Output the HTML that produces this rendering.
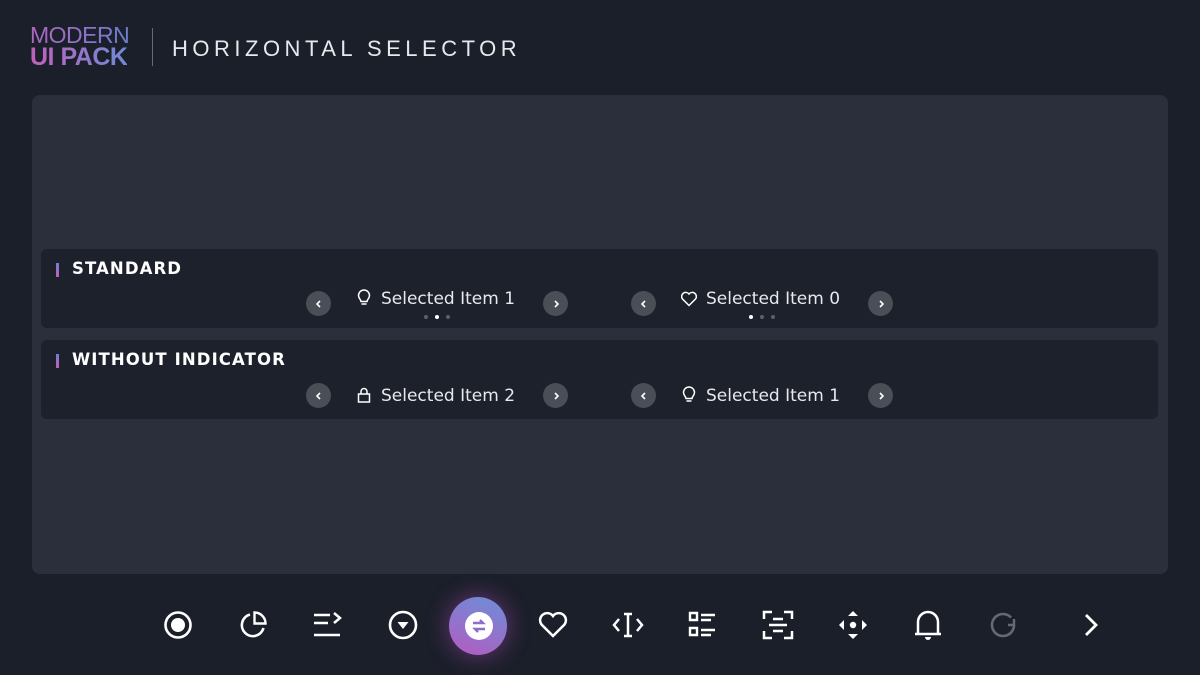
<!DOCTYPE html>
<html><head><style>
*{margin:0;padding:0;box-sizing:border-box}
body{width:1200px;height:675px;background:#1b1f2a;font-family:"Liberation Sans",sans-serif;color:#fff;position:relative;overflow:hidden}
.abs{position:absolute}
.logo1{left:30px;top:24px;font-size:23px;line-height:22px;background:linear-gradient(90deg,#b065c0,#6d7fcf);-webkit-background-clip:text;color:transparent;letter-spacing:-0.5px}
.logo2{left:30px;top:45px;font-size:25px;font-weight:bold;line-height:24px;background:linear-gradient(90deg,#c061b8,#6f8ad8);-webkit-background-clip:text;color:transparent;letter-spacing:-0.5px}
.sep{left:152px;top:28px;width:1px;height:38px;background:#666a74}
.title{left:172px;top:36px;font-size:22px;letter-spacing:4.5px;color:#e8e8ec;font-weight:300}
.panel{left:32px;top:95px;width:1136px;height:479px;background:#2b2f3b;border-radius:8px}
.row{left:41px;width:1117px;height:79px;background:#1d212b;border-radius:6px}
.lbl{position:absolute;left:15px;top:10px;font-family:"DejaVu Sans",sans-serif;font-size:16.5px;font-weight:bold;letter-spacing:1.1px;padding-left:16px}
.lbl:before{content:"";position:absolute;left:0;top:4px;width:3px;height:14px;background:linear-gradient(#6d7fd0,#c060b8)}
.btn{position:absolute;width:25px;height:25px;border-radius:50%;background:#4a4e57;display:flex;align-items:center;justify-content:center}
.txt{position:absolute;font-family:"DejaVu Sans",sans-serif;font-size:17px;color:#e8e8ee;white-space:nowrap}
.dots{position:absolute;display:flex;gap:7px}
.dots i{width:4px;height:4px;border-radius:50%;background:#5b5f68}
.dots i.a{background:#fff}
.ic{position:absolute;top:609px;width:32px;height:32px}
</style></head><body>
<div class="abs logo1">MODERN</div>
<div class="abs logo2">UI PACK</div>
<div class="abs sep"></div>
<div class="abs title">HORIZONTAL SELECTOR</div>
<div class="abs panel"></div>

<div class="abs row" style="top:249px">
 <div class="lbl">STANDARD</div>
 <div class="btn" style="left:265px;top:42px"><svg width="10" height="10" viewBox="0 0 10 10"><path d="M6 2L3 5l3 3" stroke="#fff" stroke-width="1.6" fill="none"/></svg></div>
 <svg class="abs" style="left:315px;top:40px" width="16" height="18" viewBox="0 0 16 18"><path d="M5 12.5c0-2-2.5-3-2.5-6a5.5 5.5 0 0111 0c0 3-2.5 4-2.5 6zM5.5 15h5" stroke="#fff" stroke-width="1.5" fill="none"/></svg>
 <div class="txt" style="left:340px;top:40px">Selected Item 1</div>
 <div class="dots" style="left:383px;top:66px"><i></i><i class="a"></i><i></i></div>
 <div class="btn" style="left:502px;top:42px"><svg width="10" height="10" viewBox="0 0 10 10"><path d="M4 2l3 3-3 3" stroke="#fff" stroke-width="1.6" fill="none"/></svg></div>
 <div class="btn" style="left:590px;top:42px"><svg width="10" height="10" viewBox="0 0 10 10"><path d="M6 2L3 5l3 3" stroke="#fff" stroke-width="1.6" fill="none"/></svg></div>
 <svg class="abs" style="left:639px;top:42px" width="18" height="16" viewBox="0 0 18 16"><path d="M9 14.5L2.5 8A3.8 3.8 0 019 3a3.8 3.8 0 016.5 5z" stroke="#fff" stroke-width="1.5" fill="none"/></svg>
 <div class="txt" style="left:665px;top:40px">Selected Item 0</div>
 <div class="dots" style="left:708px;top:66px"><i class="a"></i><i></i><i></i></div>
 <div class="btn" style="left:827px;top:42px"><svg width="10" height="10" viewBox="0 0 10 10"><path d="M4 2l3 3-3 3" stroke="#fff" stroke-width="1.6" fill="none"/></svg></div>
</div>

<div class="abs row" style="top:340px">
 <div class="lbl">WITHOUT INDICATOR</div>
 <div class="btn" style="left:265px;top:43px"><svg width="10" height="10" viewBox="0 0 10 10"><path d="M6 2L3 5l3 3" stroke="#fff" stroke-width="1.6" fill="none"/></svg></div>
 <svg class="abs" style="left:315px;top:46px" width="16" height="18" viewBox="0 0 16 18"><path d="M2.5 8h11v8h-11zM5 8V5.5a3 3 0 016 0V8" stroke="#fff" stroke-width="1.5" fill="none"/></svg>
 <div class="txt" style="left:340px;top:46px">Selected Item 2</div>
 <div class="btn" style="left:502px;top:43px"><svg width="10" height="10" viewBox="0 0 10 10"><path d="M4 2l3 3-3 3" stroke="#fff" stroke-width="1.6" fill="none"/></svg></div>
 <div class="btn" style="left:590px;top:43px"><svg width="10" height="10" viewBox="0 0 10 10"><path d="M6 2L3 5l3 3" stroke="#fff" stroke-width="1.6" fill="none"/></svg></div>
 <svg class="abs" style="left:640px;top:46px" width="16" height="18" viewBox="0 0 16 18"><path d="M5 12.5c0-2-2.5-3-2.5-6a5.5 5.5 0 0111 0c0 3-2.5 4-2.5 6zM5.5 15h5" stroke="#fff" stroke-width="1.5" fill="none"/></svg>
 <div class="txt" style="left:665px;top:46px">Selected Item 1</div>
 <div class="btn" style="left:827px;top:43px"><svg width="10" height="10" viewBox="0 0 10 10"><path d="M4 2l3 3-3 3" stroke="#fff" stroke-width="1.6" fill="none"/></svg></div>
</div>

<!-- dock -->
<svg class="ic" style="left:162px" viewBox="0 0 32 32"><circle cx="16" cy="16" r="12.5" stroke="#fff" stroke-width="2.6" fill="none"/><circle cx="16" cy="16" r="7" fill="#fff"/></svg>
<svg class="ic" style="left:237px" viewBox="0 0 32 32"><path d="M13 5.5A11 11 0 1026.5 19" stroke="#fff" stroke-width="2.6" fill="none"/><path d="M17.5 3.5a11 11 0 0111 11h-11z" stroke="#fff" stroke-width="2.4" fill="none"/></svg>
<svg class="ic" style="left:312px" viewBox="0 0 32 32"><path d="M2 6h16M2 14h14M2 26h26M22 4l6 5-6 5" stroke="#fff" stroke-width="2.5" fill="none"/></svg>
<svg class="ic" style="left:387px" viewBox="0 0 32 32"><circle cx="16" cy="16" r="13" stroke="#fff" stroke-width="2.6" fill="none"/><path d="M10.5 13h11L16 20z" fill="#fff"/></svg>
<div class="abs" style="left:449px;top:597px;width:58px;height:58px;border-radius:50%;background:linear-gradient(200deg,#6b8fd8,#b45bc0);box-shadow:0 0 20px 4px rgba(190,80,200,.35)"></div>
<svg class="abs" style="left:465px;top:612px" width="28" height="28" viewBox="0 0 28 28"><circle cx="14" cy="14" r="14" fill="#fff"/><path d="M8 11h10l-3-3M20 17H10l3 3" stroke="#8e6ec8" stroke-width="2.4" fill="none"/></svg>
<svg class="ic" style="left:537px" viewBox="0 0 32 32"><path d="M16 27L4.5 15.5A6.5 6.5 0 0116 7a6.5 6.5 0 0111.5 8.5z" stroke="#fff" stroke-width="2.5" fill="none"/></svg>
<svg class="ic" style="left:612px" viewBox="0 0 32 32"><path d="M7 10l-5 6 5 6M25 10l5 6-5 6M12 5h8M12 27h8M16 5v22" stroke="#fff" stroke-width="2.5" fill="none"/></svg>
<svg class="ic" style="left:687px" viewBox="0 0 32 32"><path d="M3 4h7v7H3zM3 19h7v7H3z" stroke="#fff" stroke-width="2.4" fill="none"/><path d="M14 6h14M14 11h10M14 21h14M14 26h10" stroke="#fff" stroke-width="2.4"/></svg>
<svg class="ic" style="left:762px" viewBox="0 0 32 32"><path d="M2 10V3h8M22 3h8v7M30 22v7h-8M10 29H2v-7M11 10h10M7 16h18M11 22h10" stroke="#fff" stroke-width="2.5" fill="none"/></svg>
<svg class="ic" style="left:837px" viewBox="0 0 32 32"><path d="M16 2l5 5H11zM16 30l5-5H11zM2 16l5-5v10zM30 16l-5-5v10z" fill="#fff"/><circle cx="16" cy="16" r="3.2" fill="#fff"/></svg>
<svg class="ic" style="left:912px" viewBox="0 0 32 32"><path d="M6 25V13a10 10 0 0120 0v12zM3 25h26" stroke="#fff" stroke-width="2.5" fill="none"/><path d="M13 28h6a3 3 0 01-6 0z" fill="#fff"/></svg>
<svg class="ic" style="left:987px" viewBox="0 0 32 32"><path d="M27 16A11 11 0 1116 5a11 11 0 018 3.5" stroke="#66696f" stroke-width="2.6" fill="none"/><path d="M27 10v6h-6" stroke="#66696f" stroke-width="2.4" fill="none"/></svg>
<svg class="ic" style="left:1075px" viewBox="0 0 32 32"><path d="M11 6l10 10-10 10" stroke="#fff" stroke-width="2.8" fill="none"/></svg>
</body></html>
